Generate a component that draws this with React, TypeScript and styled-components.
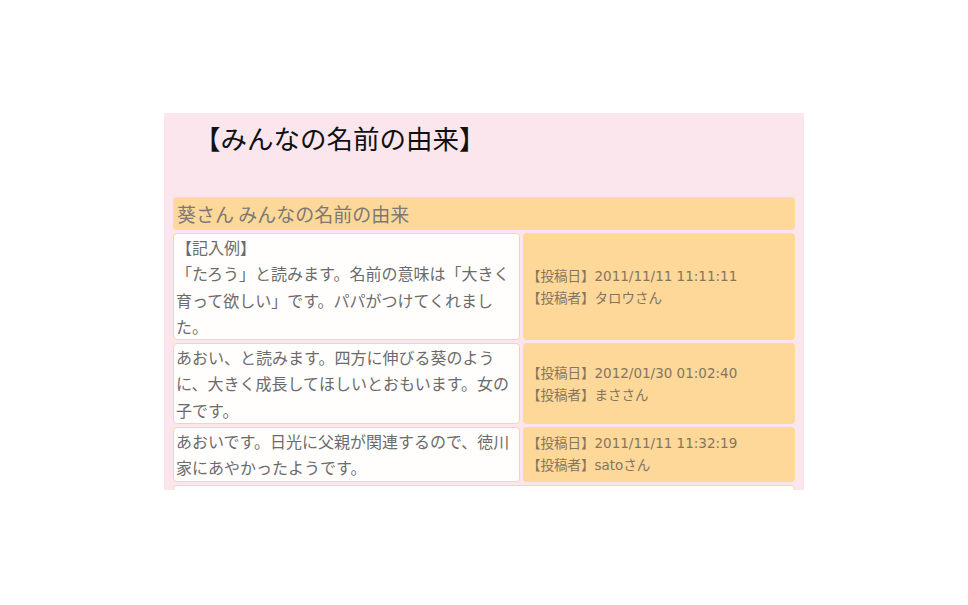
import React from "react";
import styled, { createGlobalStyle } from "styled-components";

const Global = createGlobalStyle`
  html, body { margin: 0; padding: 0; background: #ffffff; }
  body { font-family: "Noto Sans CJK JP", "Noto Sans", sans-serif; }
`;

const Page = styled.div`
  padding: 113px 0 0 164px;
`;

const Panel = styled.section`
  width: 640px;
  height: 377px;
  overflow: hidden;
  background: #fbe6ee;
  box-sizing: border-box;
  padding: 0 9px;
`;

const Title = styled.h1`
  margin: 0;
  height: 84px;
  box-sizing: border-box;
  padding: 7px 0 0 21px;
  font-size: 26.5px;
  line-height: 36px;
  font-weight: 400;
  color: #111;
`;

const Board = styled.div`
  display: flex;
  flex-direction: column;
  gap: 3px;
`;

const Heading = styled.h2`
  margin: 0;
  height: 33px;
  padding: 0 4px;
  border-radius: 4px;
  background: #fdd899;
  font-size: 19px;
  font-weight: 400;
  line-height: 33px;
  color: #7d7875;
`;

const Row = styled.div`
  display: grid;
  grid-template-columns: 347px 1fr;
  gap: 3px;
`;

const Body = styled.div`
  border: 1px solid #fcd4a2;
  border-radius: 4px;
  background: #fffefd;
  padding: 0 2px;
  font-size: 16px;
  line-height: 26.3px;
  color: #6b6b6b;
`;

const Meta = styled.div`
  border-radius: 4px;
  background: #fdd899;
  padding: 0 4px;
  display: flex;
  flex-direction: column;
  justify-content: center;
  font-family: "DejaVu Sans", "Noto Sans CJK JP", sans-serif;
  font-size: 13.5px;
  line-height: 22px;
  color: #857560;
`;

const Continuation = styled.div`
  height: 40px;
  border: 1px solid #fcd4a2;
  border-radius: 4px;
  background: #fffefd;
`;

type Post = { body: React.ReactNode; date: string; author: string };

const posts: Post[] = [
  {
    body: (
      <>
        【記入例】
        <br />
        「たろう」と読みます。名前の意味は「大きく育って欲しい」です。パパがつけてくれました。
      </>
    ),
    date: "2011/11/11 11:11:11",
    author: "タロウさん",
  },
  {
    body: "あおい、と読みます。四方に伸びる葵のように、大きく成長してほしいとおもいます。女の子です。",
    date: "2012/01/30 01:02:40",
    author: "まささん",
  },
  {
    body: "あおいです。日光に父親が関連するので、徳川家にあやかったようです。",
    date: "2011/11/11 11:32:19",
    author: "satoさん",
  },
];

export default function App() {
  return (
    <>
      <Global />
      <Page>
        <Panel>
          <Title>【みんなの名前の由来】</Title>
          <Board>
            <Heading>葵さん みんなの名前の由来</Heading>
            {posts.map((p, i) => (
              <Row key={i}>
                <Body>{p.body}</Body>
                <Meta>
                  <div>【投稿日】{p.date}</div>
                  <div>【投稿者】{p.author}</div>
                </Meta>
              </Row>
            ))}
            <Continuation />
          </Board>
        </Panel>
      </Page>
    </>
  );
}
